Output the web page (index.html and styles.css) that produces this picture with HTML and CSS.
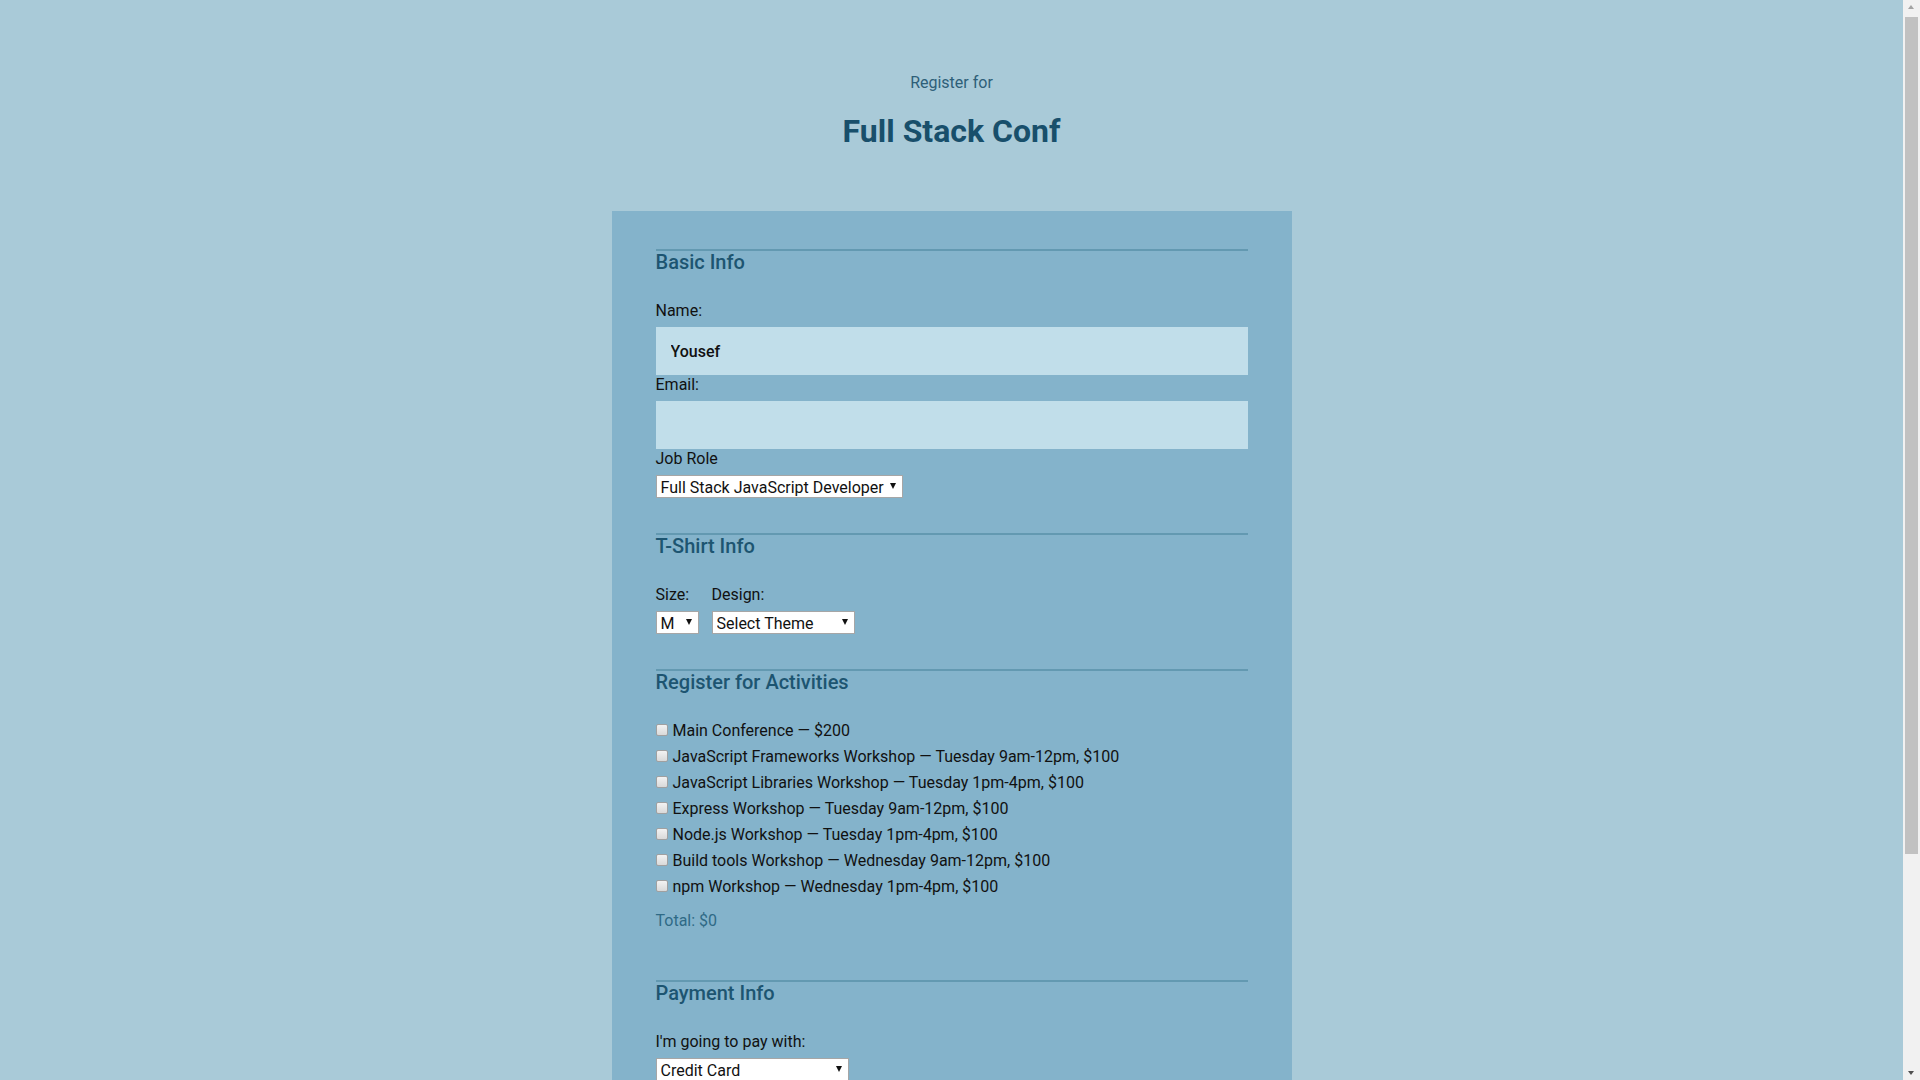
FILE: index.html
```html
<!DOCTYPE html>
<html lang="en">
<head>
<meta charset="utf-8">
<title>Full Stack Conf</title>
<link rel="stylesheet" href="styles.css">
</head>
<body>
<header class="page-header">
  <p class="pre-title">Register for</p>
  <h1 class="title">Full Stack Conf</h1>
</header>
<form class="card">
  <fieldset class="section">
    <h2 class="section-title">Basic Info</h2>
    <label class="field-label first" for="name">Name:</label>
    <input class="text-input" id="name" type="text" value="Yousef">
    <label class="field-label" for="mail">Email:</label>
    <input class="text-input" id="mail" type="email">
    <label class="field-label" for="title">Job Role</label>
    <span class="select-wrap w-role"><select class="select" id="title"><option>Full Stack JavaScript Developer</option></select></span>
  </fieldset>

  <fieldset class="section tshirt">
    <h2 class="section-title">T-Shirt Info</h2>
    <div class="shirt-row">
      <div class="shirt-col size-col">
        <label class="field-label first" for="size">Size:</label>
        <span class="select-wrap w-size"><select class="select" id="size"><option>M</option></select></span>
      </div>
      <div class="shirt-col">
        <label class="field-label first" for="design">Design:</label>
        <span class="select-wrap w-design"><select class="select" id="design"><option>Select Theme</option></select></span>
      </div>
    </div>
  </fieldset>

  <fieldset class="section activities">
    <h2 class="section-title">Register for Activities</h2>
    <div class="activity-list">
      <label class="activity"><input class="check" type="checkbox"> Main Conference — $200</label>
      <label class="activity"><input class="check" type="checkbox"> JavaScript Frameworks Workshop — Tuesday 9am-12pm, $100</label>
      <label class="activity"><input class="check" type="checkbox"> JavaScript Libraries Workshop — Tuesday 1pm-4pm, $100</label>
      <label class="activity"><input class="check" type="checkbox"> Express Workshop — Tuesday 9am-12pm, $100</label>
      <label class="activity"><input class="check" type="checkbox"> Node.js Workshop — Tuesday 1pm-4pm, $100</label>
      <label class="activity"><input class="check" type="checkbox"> Build tools Workshop — Wednesday 9am-12pm, $100</label>
      <label class="activity"><input class="check" type="checkbox"> npm Workshop — Wednesday 1pm-4pm, $100</label>
    </div>
    <p class="total">Total: $0</p>
  </fieldset>

  <fieldset class="section payment">
    <h2 class="section-title">Payment Info</h2>
    <label class="field-label first" for="payment">I'm going to pay with:</label>
    <span class="select-wrap w-pay"><select class="select" id="payment"><option>Credit Card</option></select></span>
    <div class="cc-row">
      <div class="cc-col cc-num">
        <label class="field-label" for="cc-num">Card Number:</label>
        <input class="text-input" id="cc-num" type="text">
      </div>
      <div class="cc-col cc-small">
        <label class="field-label" for="zip">Zip Code:</label>
        <input class="text-input" id="zip" type="text">
      </div>
      <div class="cc-col cc-small">
        <label class="field-label" for="cvv">CVV:</label>
        <input class="text-input" id="cvv" type="text">
      </div>
    </div>
  </fieldset>
  <button class="submit" type="button">Register</button>
</form>
<div class="scrollbar" aria-hidden="true">
  <span class="sb-arrow sb-up"></span>
  <span class="sb-thumb"></span>
  <span class="sb-arrow sb-down"></span>
</div>
</body>
</html>
```

FILE: styles.css
```css
html {
  background: #a9cad8;
}
body {
  margin: 0 17px 0 0;
  padding: 73px 0 60px;
  font-family: Roboto, "Liberation Sans", sans-serif;
  font-size: 16px;
  color: #111;
  background: #a9cad8;
}
.page-header {
  text-align: center;
}
.pre-title {
  margin: 0;
  font-size: 16px;
  line-height: 20px;
  color: #2e5f78;
}
.title {
  margin: 19px 0 0;
  font-size: 32px;
  line-height: 38px;
  font-weight: 700;
  color: #184f6b;
}
.card {
  width: 592px;
  margin: 61px auto 0;
  padding: 38px 44px 40px;
  background: #84b3cb;
}
.section {
  margin: 0;
  padding: 0;
  border: 0;
  border-top: 2px solid #6399b1;
  min-width: 0;
}
.section-title {
  margin: 0;
  padding-bottom: 2px;
  font-size: 20px;
  line-height: 22px;
  font-weight: 500;
  color: #1d5571;
}
.field-label {
  display: block;
  line-height: 19px;
  margin-bottom: 7px;
}
.field-label.first {
  margin-top: 26px;
}
.text-input {
  display: block;
  box-sizing: border-box;
  width: 100%;
  height: 48px;
  margin: 0;
  padding: 0 15px;
  border: 0;
  background: #c1deea;
  font-family: Roboto, "Liberation Sans", sans-serif;
  font-size: 16px;
  font-weight: 500;
  color: #111;
  outline: none;
}
.select-wrap {
  position: relative;
  display: block;
  height: 23px;
}
.select-wrap::after {
  content: "";
  position: absolute;
  top: 8px;
  right: 7px;
  border-left: 3.5px solid transparent;
  border-right: 3.5px solid transparent;
  border-top: 6px solid #111;
  pointer-events: none;
}
.select {
  -webkit-appearance: none;
  appearance: none;
  box-sizing: border-box;
  height: 23px;
  width: 100%;
  margin: 0;
  padding: 2px 0 0 4px;
  border: 1px solid #a6a6a6;
  border-radius: 0;
  background: #fff;
  font-family: Roboto, "Liberation Sans", sans-serif;
  font-size: 16px;
  line-height: 19px;
  color: #111;
}
.w-role { width: 247px; }
.w-size { width: 43px; }
.w-design { width: 143px; }
.w-pay { width: 193px; }
.tshirt,
.activities {
  margin-top: 35px;
}
.shirt-row {
  display: flex;
  gap: 13px;
}
.activity-list {
  margin-top: 22px;
  display: flex;
  flex-direction: column;
}
.activity {
  display: flex;
  align-items: center;
  height: 26px;
  gap: 1px;
  white-space: pre;
}
.check {
  -webkit-appearance: none;
  appearance: none;
  box-sizing: border-box;
  flex: none;
  width: 12px;
  height: 12px;
  margin: -1px 0 0 0;
  border: 1px solid #a0a0a0;
  border-radius: 2px;
  background: linear-gradient(#f2f2f2, #d9d9d9);
}
.total {
  margin: 12px 0 0;
  line-height: 19px;
  color: #2f6a86;
}
.payment {
  margin-top: 50px;
}
.cc-row {
  display: flex;
  gap: 16px;
  margin-top: 24px;
}
.cc-num { flex: 2; }
.cc-small { flex: 1; }
.submit {
  display: block;
  margin-top: 40px;
  padding: 14px 26px;
  border: 0;
  border-radius: 4px;
  background: #22627e;
  color: #fff;
  font-family: Roboto, "Liberation Sans", sans-serif;
  font-size: 17px;
}
.scrollbar {
  position: fixed;
  top: 0;
  right: 0;
  width: 17px;
  height: 100vh;
  background: #f1f1f1;
}
.sb-thumb {
  position: absolute;
  top: 17px;
  left: 2px;
  width: 13px;
  height: 837px;
  background: #c1c1c1;
}
.sb-arrow {
  position: absolute;
  left: 5px;
  width: 0;
  height: 0;
  border-left: 3.5px solid transparent;
  border-right: 3.5px solid transparent;
}
.sb-up {
  top: 5px;
  border-bottom: 4px solid #a3a3a3;
}
.sb-down {
  bottom: 5px;
  border-top: 4px solid #505050;
}
```
